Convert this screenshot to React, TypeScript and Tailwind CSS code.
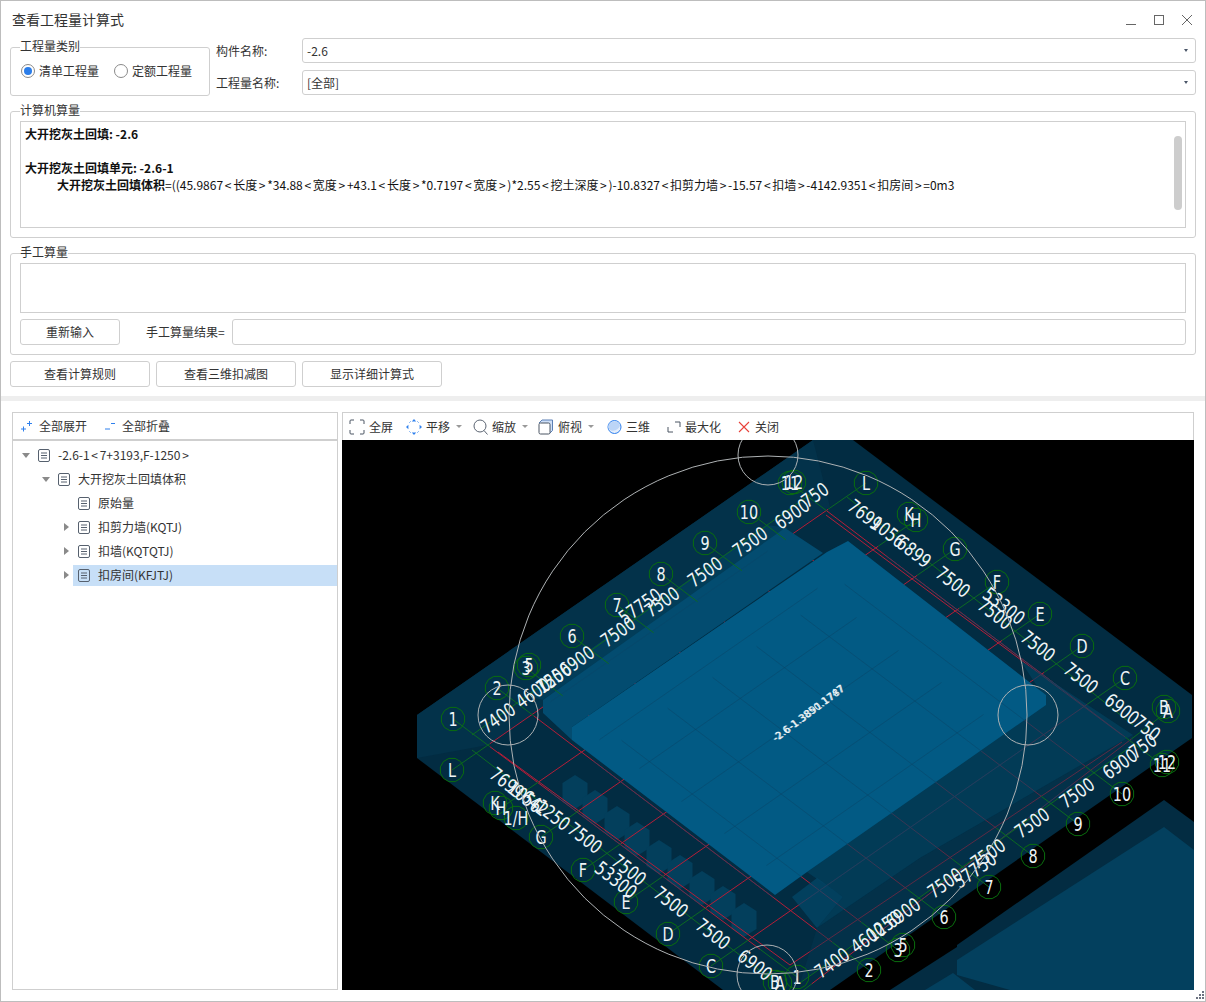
import React from 'react';

const fontCn = { fontFamily: '"Noto Sans CJK SC", "Noto Sans", sans-serif' };

type Pt = [number, number];

// axis pairs: bubble on one side -> bubble on the other side
const numberAxes: [Pt, Pt][] = [
    [[453, 719], [797, 977]],
    [[497, 688], [869, 970]],
    [[526, 668], [898, 950]],
    [[572, 636], [944, 917]],
    [[617, 605], [989, 887]],
    [[661, 574], [1033, 856]],
    [[705, 543], [1078, 824]],
    [[749, 512], [1122, 794]],
    [[790, 483], [1162, 765]],
];
const letterAxes: [Pt, Pt][] = [
    [[452, 770], [866, 483]],
    [[501, 808], [916, 520]],
    [[541, 837], [955, 549]],
    [[583, 870], [997, 582]],
    [[626, 902], [1040, 614]],
    [[668, 934], [1082, 646]],
    [[711, 966], [1125, 678]],
    [[775, 1012], [1168, 711]],
];

const bubbles: [number, number, string][] = [
    [453, 719, '1'], [497, 688, '2'], [526, 668, '3'], [529, 665, '5'], [572, 636, '6'], [617, 605, '7'],
    [661, 574, '8'], [705, 543, '9'], [749, 512, '10'], [790, 483, '11'], [794, 482, '12'],
    [866, 483, 'L'], [909, 514, 'K'], [916, 520, 'H'], [955, 549, 'G'], [997, 582, 'F'], [1040, 614, 'E'],
    [1082, 646, 'D'], [1125, 678, 'C'], [1164, 707, 'B'], [1168, 711, 'A'],
    [452, 770, 'L'], [495, 803, 'K'], [501, 808, 'H'], [516, 818, '1/H'], [541, 837, 'G'], [583, 870, 'F'],
    [626, 902, 'E'], [668, 934, 'D'], [711, 966, 'C'], [775, 982, 'B'], [780, 983, 'A'],
    [1167, 762, '12'], [1162, 765, '11'], [1122, 794, '10'], [1078, 824, '9'], [1033, 856, '8'], [989, 887, '7'],
    [944, 917, '6'], [903, 945, '5'], [898, 950, '3'], [869, 970, '2'], [797, 977, '1'],
];

// x, y, text, angle
const dims: [number, number, string, number][] = [
    [498, 718, '7400', -35], [533, 693, '4600', -35], [550, 681, '750', -35], [554, 678, '1250', -35], [577, 661, '6900', -35],
    [618, 632, '7500', -35], [640, 606, '57750', -35], [662, 602, '7500', -35], [705, 572, '7500', -35], [750, 542, '7500', -35],
    [792, 514, '6900', -35], [815, 495, '750', -35],
    [865, 515, '7699', 38], [888, 532, '1056', 38], [914, 552, '6899', 38], [953, 582, '7500', 38], [995, 614, '7500', 38],
    [1004, 606, '53300', 38], [1038, 646, '7500', 38], [1081, 678, '7500', 38], [1122, 709, '6900', 38], [1147, 728, '750', 38],
    [507, 783, '7699', 38], [525, 797, '1056', 38], [535, 803, '642', 38], [553, 815, '1250', 38], [585, 838, '7500', 38],
    [629, 870, '7500', 38], [616, 880, '53300', 38], [671, 902, '7500', 38], [713, 934, '7500', 38], [755, 965, '6900', 38],
    [832, 963, '7400', -35], [868, 938, '4600', -35], [884, 926, '1250', -35], [903, 913, '6900', -35], [945, 883, '7500', -35],
    [988, 854, '7500', -35], [975, 870, '57750', -35], [1032, 823, '7500', -35], [1077, 793, '7500', -35],
    [1120, 764, '6900', -35], [1143, 746, '750', -35],
];

const hexCenters: Pt[] = [[575, 792], [595, 807], [617, 823], [637, 839], [659, 857], [680, 872], [702, 888], [723, 903], [744, 920]];

const ring = (x: number, y: number, r: number) =>
    Array.from({ length: 12 }, (_, i) => {
        const a = (Math.PI / 6) * i + Math.PI / 12;
        return `${(x + r * Math.cos(a)).toFixed(1)},${(y + r * Math.sin(a)).toFixed(1)}`;
    }).join(' ');

const along = (a: Pt, b: Pt, d: number): Pt => {
    const len = Math.hypot(b[0] - a[0], b[1] - a[1]);
    return [a[0] + ((b[0] - a[0]) * d) / len, a[1] + ((b[1] - a[1]) * d) / len];
};

const CadView = () => {
    const axes = [...numberAxes, ...letterAxes];
    return (
        <svg viewBox="342 440 852 550" className="block h-[550px] w-[852px] bg-black">
            <polygon points="417,715 813,440 853,440 1192,695 1192,738 830,990 723,990 417,758" fill="#022c42" />
            {/* top left strip */}
            <polygon points="417,715 813,440 830,507 488,745 417,758" fill="#03324a" />
            {/* lower right blocks */}
            <polygon points="1164,800 1194,822 1194,990 957,990 957,945" fill="#032c42" />
            <polygon points="1164,827 1194,850 1194,990 1010,990 957,975 957,960" fill="#03405e" />
            <polygon points="957,947 957,990 890,990" fill="#032c42" />
            <polygon points="953,973 975,990 925,990" fill="#03405e" />

            {hexCenters.map(([x, y], i) => (
                <polygon
                    key={i}
                    points={`${x - 12.5},${y - 9} ${x},${y - 17} ${x + 12.5},${y - 9} ${x + 12.5},${y + 9} ${x},${y + 17} ${x - 12.5},${y + 9}`}
                    fill="#033f5c"
                />
            ))}

            {/* red grid, under the solid body */}
            {axes.map(([a, b], i) => {
                const s = along(a, b, 46);
                const e = along(b, a, 46);
                return <line key={i} x1={s[0]} y1={s[1]} x2={e[0]} y2={e[1]} stroke="#b51e38" strokeWidth="1" />;
            })}
            <polyline points="498,752 790,965 1122,742" fill="none" stroke="#b51e38" />
            <polyline points="826,515 1122,735" fill="none" stroke="#b51e38" />

            {/* translucent layers, red reads muted through them */}
            <polygon points="525,695 767,525 788,528 543,700" fill="#03415f" fillOpacity="0.7" />
            <polygon points="1046,700 807,872 843,897 817,928 920,858 1133,735 1020,660" fill="#03425f" fillOpacity="0.7" />
            <polygon points="800,983 1133,745 1133,735 920,858 817,928" fill="#033650" fillOpacity="0.5" />
            <polygon points="792,897 817,878 843,897 817,928" fill="#03486b" fillOpacity="0.7" />

            {/* solid body */}
            <polygon points="543,700 785,528 823,553 572,727 572,740 543,713" fill="#034c70" />
            <polygon points="572,727 827,552 848,541 1046,695 1046,705 807,872 775,895 572,740" fill="#025a84" />
            {axes.map(([a, b], i) => {
                const s = along(a, b, 120);
                const e = along(b, a, 120);
                return <line key={i} x1={s[0]} y1={s[1]} x2={e[0]} y2={e[1]} stroke="#0a4668" strokeWidth="1" opacity="0.5" />;
            })}

            {/* dimension lines and axis stubs */}
            <g stroke="#0c6a22" strokeWidth="1" fill="none">
                <line x1="472" y1="735" x2="815" y2="491" />
                <line x1="472" y1="750" x2="775" y2="982" />
                <line x1="847" y1="497" x2="1133" y2="725" />
                <line x1="800" y1="983" x2="1133" y2="745" />
                {axes.map(([a, b], i) => {
                    const s = along(a, b, 46);
                    const e = along(b, a, 46);
                    return (
                        <g key={i}>
                            <line x1={a[0]} y1={a[1]} x2={s[0]} y2={s[1]} />
                            <line x1={b[0]} y1={b[1]} x2={e[0]} y2={e[1]} />
                        </g>
                    );
                })}
            </g>

            {bubbles.map(([x, y], i) => (
                <polygon key={i} points={ring(x, y, 12)} fill="none" stroke="#0a6e0e" strokeWidth="1" />
            ))}
            <g fill="#eef4f7" style={{ fontFamily: '"DejaVu Sans", sans-serif' }}>
                {bubbles.map(([x, y, t], i) => (
                    <text key={i} fontSize="20" textAnchor="middle" transform={`translate(${x} ${y + 7}) scale(0.72 1)`}>
                        {t}
                    </text>
                ))}
                {dims.map(([x, y, t, r], i) => (
                    <text key={i} fontSize="19" textAnchor="middle" dominantBaseline="central" transform={`translate(${x} ${y}) rotate(${r}) scale(0.78 1)`}>
                        {t}
                    </text>
                ))}
                <text x="810" y="716" fontSize="10" textAnchor="middle" transform="rotate(-37 810 716)">
                    -2.6-1.3850.1747
                </text>
                <text x="811" y="716" fontSize="10" textAnchor="middle" transform="rotate(-37 811 716)">
                    -2.6-1.3891.1787
                </text>
            </g>

            <g fill="none" stroke="#aeb2b4" strokeWidth="1">
                <circle cx="768" cy="715" r="259" />
                <circle cx="768" cy="455" r="30" />
                <circle cx="508" cy="715" r="30" />
                <circle cx="1028" cy="715" r="30" />
                <circle cx="767" cy="975" r="30" />
            </g>
        </svg>
    );
};

const GroupBox = ({ title, className, children }: { title: string; className: string; children?: React.ReactNode }) => (
    <div className={`relative rounded-[3px] border border-[#cfcfcf] ${className}`}>
        <span className="absolute left-[9px] top-[-10px] bg-white text-[12px] leading-[16px] text-[#333]">{title}</span>
        {children}
    </div>
);

const Btn = ({ label, className }: { label: string; className: string }) => (
    <button className={`flex h-[26px] items-center justify-center rounded-[3px] border border-[#cfcfcf] bg-white text-[12px] text-[#333] ${className}`}>
        {label}
    </button>
);

const Combo = ({ value }: { value: string }) => (
    <div className="flex h-[25px] flex-1 items-center justify-between rounded-[3px] border border-[#cfcfcf] pl-[4px] pr-[7px] text-[12px] text-[#333]">
        <span>{value}</span>
        <span className="h-0 w-0 border-x-[2.5px] border-t-[3px] border-x-transparent border-t-[#4a5568]" />
    </div>
);

const Radio = ({ on, label }: { on?: boolean; label: string }) => (
    <div className="flex items-center gap-[4px] text-[12px] text-[#333]">
        <span className="flex h-[14px] w-[14px] items-center justify-center rounded-full border border-[#8a8a8a]">
            {on && <span className="h-[8px] w-[8px] rounded-full bg-[#2b7de9]" />}
        </span>
        <span>{label}</span>
    </div>
);

// the < and > sit wider in the reference
const Lt = () => <span className="mx-[1.7px]">&lt;</span>;
const Gt = () => <span className="mx-[1.7px]">&gt;</span>;

const DocIcon = () => (
    <svg width="13" height="13" viewBox="0 0 13 13" className="shrink-0">
        <rect x="0.5" y="0.5" width="11" height="12" rx="1.5" fill="none" stroke="#56606e" />
        <path d="M3 4h6M3 6.5h6M3 9h6" stroke="#56606e" />
    </svg>
);

const TreeRow = ({ children, level, arrow, selected }: { children: React.ReactNode; level: number; arrow?: 'down' | 'right'; selected?: boolean }) => {
    const pad = level === 0 ? 'pl-[8px]' : level === 1 ? 'pl-[28px]' : 'pl-[48px]';
    return (
        <div className={`flex h-[24px] items-center ${pad}`}>
            <span className="flex w-[10px] justify-center">
                {arrow === 'down' && <span className="h-0 w-0 border-x-[4px] border-t-[5px] border-x-transparent border-t-[#8a8a8a]" />}
                {arrow === 'right' && <span className="h-0 w-0 border-y-[4px] border-l-[5px] border-y-transparent border-l-[#8a8a8a]" />}
            </span>
            <div className={`ml-[2px] flex h-[21px] flex-1 items-center gap-[7px] pl-[5px] text-[12px] text-[#333] ${selected ? 'bg-[#c7dff7]' : ''}`}>
                <DocIcon />
                <span>{children}</span>
            </div>
        </div>
    );
};

const Caret = () => <span className="ml-[6px] h-0 w-0 border-x-[3px] border-t-[3px] border-x-transparent border-t-[#999]" />;

const ToolItem = ({ icon, label, caret, className }: { icon: React.ReactNode; label: string; caret?: boolean; className: string }) => (
    <div className={`flex items-center text-[12px] text-[#333] ${className}`}>
        {icon}
        <span className="ml-[4px]">{label}</span>
        {caret && <Caret />}
    </div>
);

const FullIcon = () => (
    <svg width="16" height="16" viewBox="0 0 16 16" fill="none" stroke="#4b5563">
        <path d="M1 5V2a1 1 0 0 1 1-1h3M11 1h3a1 1 0 0 1 1 1v3M15 11v3a1 1 0 0 1-1 1h-3M5 15H2a1 1 0 0 1-1-1v-3" />
    </svg>
);
const MoveIcon = () => (
    <svg width="16" height="16" viewBox="0 0 16 16" fill="#2f80ed" stroke="none">
        <path d="M8 0l2.200 2.400H5.800zM8 16l-2.200-2.400h4.400zM0 8l2.400-2.200v4.400zM16 8l-2.400 2.200V5.800z" />
        <path d="M3.500 3.500l1-1M11.500 2.500l1 1M12.500 12.500l-1 1M4.500 13.500l-1-1" stroke="#2f80ed" fill="none" />
    </svg>
);
const ZoomIcon = () => (
    <svg width="15" height="16" viewBox="0 0 15 16" fill="none" stroke="#5b6472">
        <circle cx="7" cy="7" r="6" />
        <path d="M11 11.500L14.500 15.500" />
    </svg>
);
const CubeIcon = () => (
    <svg width="16" height="16" viewBox="0 0 16 16" fill="none">
        <path d="M1 4l3-3h10.500v10.500l-3 3" fill="#cfe0f8" stroke="#5b7fb5" />
        <rect x="1" y="4" width="11" height="11" rx="1.500" fill="#fff" stroke="#4b5563" />
    </svg>
);
const OrbIcon = () => (
    <svg width="15" height="14" viewBox="0 0 15 14">
        <circle cx="7.500" cy="7" r="6.500" fill="#e4eefc" stroke="#2f80ed" />
        <ellipse cx="7" cy="6" rx="6" ry="4.500" fill="#bcd5f7" transform="rotate(-20 7 6)" />
    </svg>
);
const MaxIcon = () => (
    <svg width="14" height="14" viewBox="0 0 14 14" fill="none" stroke="#4b5563">
        <path d="M1 7v5h5M8 2h5v5" />
    </svg>
);
const CloseIcon = () => (
    <svg width="13" height="12" viewBox="0 0 13 12" stroke="#e8413a" strokeWidth="1.100">
        <path d="M1 1l10 10M11 1L1 11" />
    </svg>
);

const App = () => {
    return (
        <div className="flex h-[1002px] w-[1206px] flex-col overflow-hidden border border-[#bdbdbd] bg-white" style={fontCn}>
            {/* title bar */}
            <div className="flex h-[37px] shrink-0 items-center justify-between pl-[11px] pr-[13px]">
                <span className="text-[14px] text-[#333]">查看工程量计算式</span>
                <div className="flex items-center gap-[18px]">
                    <svg width="10" height="10" viewBox="0 0 10 10" stroke="#666">
                        <path d="M0 9.500h10" />
                    </svg>
                    <svg width="10" height="10" viewBox="0 0 10 10" fill="none" stroke="#666">
                        <rect x="0.500" y="0.500" width="9" height="9" />
                    </svg>
                    <svg width="10" height="10" viewBox="0 0 10 10" stroke="#666">
                        <path d="M0 0l10 10M10 0L0 10" />
                    </svg>
                </div>
            </div>

            <div className="flex shrink-0 flex-col px-[9px]">
                <div className="flex">
                    <GroupBox title="工程量类别" className="mt-[9px] h-[49px] w-[200px]">
                        <div className="flex gap-[15px] pl-[10px] pt-[14px]">
                            <Radio on label="清单工程量" />
                            <Radio label="定额工程量" />
                        </div>
                    </GroupBox>
                    <div className="ml-[6px] flex flex-1 flex-col gap-[7px]">
                        <div className="flex items-center">
                            <span className="w-[86px] text-[12px] text-[#333]">构件名称:</span>
                            <Combo value="-2.6" />
                        </div>
                        <div className="flex items-center">
                            <span className="w-[86px] text-[12px] text-[#333]">工程量名称:</span>
                            <Combo value="[全部]" />
                        </div>
                    </div>
                </div>

                <GroupBox title="计算机算量" className="mt-[15px] h-[127px] px-[9px] pt-[9px]">
                    <div className="relative h-[107px] border border-[#cfcfcf] pl-[4px] pt-[3px] text-[12px] leading-[17px] text-[#111]">
                        <div className="font-bold">大开挖灰土回填: -2.6</div>
                        <div className="h-[17px]" />
                        <div className="font-bold">大开挖灰土回填单元: -2.6-1</div>
                        <div className="pl-[32px]">
                            <span className="font-bold">大开挖灰土回填体积</span>
                            =((45.9867<Lt />长度<Gt />*34.88<Lt />宽度<Gt />+43.1<Lt />长度<Gt />*0.7197<Lt />宽度<Gt />)*2.55<Lt />挖土深度<Gt />)-10.8327<Lt />扣剪力墙<Gt />-15.57<Lt />扣墙<Gt />-4142.9351<Lt />扣房间<Gt />=0m3
                        </div>
                        <div className="absolute right-[3px] top-[14px] h-[74px] w-[8px] rounded-full bg-[#cdcdcd]" />
                    </div>
                </GroupBox>

                <GroupBox title="手工算量" className="mt-[15px] h-[102px] px-[9px] pt-[9px]">
                    <div className="h-[50px] border border-[#cfcfcf]" />
                    <div className="mt-[6px] flex items-center">
                        <Btn label="重新输入" className="w-[100px]" />
                        <span className="ml-[26px] w-[86px] text-[12px] text-[#333]">手工算量结果=</span>
                        <div className="h-[26px] flex-1 rounded-[3px] border border-[#cfcfcf]" />
                    </div>
                </GroupBox>

                <div className="mt-[6px] flex gap-[6px]">
                    <Btn label="查看计算规则" className="w-[140px]" />
                    <Btn label="查看三维扣减图" className="w-[140px]" />
                    <Btn label="显示详细计算式" className="w-[140px]" />
                </div>
            </div>

            <div className="mt-[9px] h-[5px] shrink-0 bg-[#eeeeee]" />

            <div className="relative flex flex-1 gap-[4px] pl-[11px] pt-[11px]">
                <div className="flex h-[578px] w-[326px] flex-col border border-[#cfcfcf]">
                    <div className="flex h-[28px] shrink-0 items-center border-b-2 border-[#cfcfcf] pl-[8px] text-[12px] text-[#333]">
                        <svg width="11" height="11" viewBox="0 0 11 11" stroke="#2f80ed">
                            <path d="M0 8h5M2.500 5.500v5M6 2.500h5M8.500 0v5" />
                        </svg>
                        <span className="ml-[7px]">全部展开</span>
                        <svg width="10" height="11" viewBox="0 0 10 11" stroke="#2f80ed" className="ml-[18px]">
                            <path d="M0 8h5M6 2.500h4" />
                        </svg>
                        <span className="ml-[7px]">全部折叠</span>
                    </div>
                    <div className="pt-[2px]">
                        <TreeRow level={0} arrow="down">-2.6-1<Lt />7+3193,F-1250<Gt /></TreeRow>
                        <TreeRow level={1} arrow="down">大开挖灰土回填体积</TreeRow>
                        <TreeRow level={2}>原始量</TreeRow>
                        <TreeRow level={2} arrow="right">扣剪力墙(KQTJ)</TreeRow>
                        <TreeRow level={2} arrow="right">扣墙(KQTQTJ)</TreeRow>
                        <TreeRow level={2} arrow="right" selected>扣房间(KFJTJ)</TreeRow>
                    </div>
                </div>

                <div className="flex w-[852px] flex-col">
                    <div className="flex h-[28px] shrink-0 items-center border border-b-0 border-[#cfcfcf] text-[12px]">
                        <ToolItem icon={<FullIcon />} label="全屏" className="ml-[6px]" />
                        <ToolItem icon={<MoveIcon />} label="平移" caret className="ml-[13px]" />
                        <ToolItem icon={<ZoomIcon />} label="缩放" caret className="ml-[11px]" />
                        <ToolItem icon={<CubeIcon />} label="俯视" caret className="ml-[10px]" />
                        <ToolItem icon={<OrbIcon />} label="三维" className="ml-[13px]" />
                        <ToolItem icon={<MaxIcon />} label="最大化" className="ml-[17px]" />
                        <ToolItem icon={<CloseIcon />} label="关闭" className="ml-[17px]" />
                    </div>
                    <CadView />
                </div>

                {/* resize grip */}
                <svg width="8" height="8" viewBox="0 0 8 8" fill="#6b7280" className="absolute bottom-[2px] right-[1px]">
                    <path d="M6 0h2v2H6zM3 3h2v2H3zM6 3h2v2H6zM0 6h2v2H0zM3 6h2v2H3zM6 6h2v2H6z" />
                </svg>
            </div>
        </div>
    );
};

export default App;
